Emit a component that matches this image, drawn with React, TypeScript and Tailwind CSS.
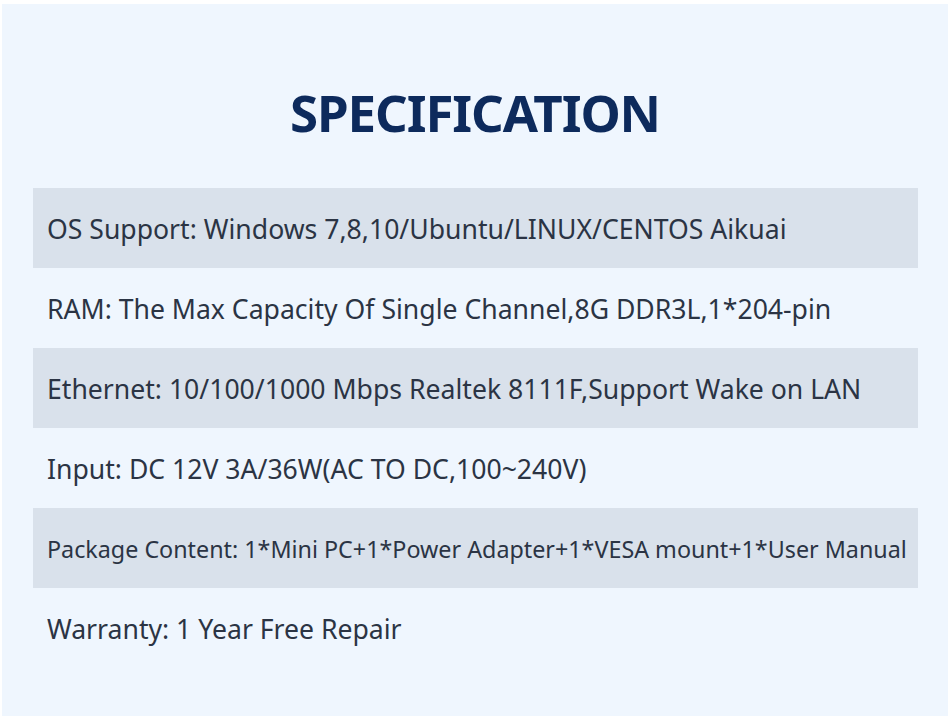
const specs = [
  { text: "OS Support: Windows 7,8,10/Ubuntu/LINUX/CENTOS Aikuai", shaded: true },
  { text: "RAM: The Max Capacity Of Single Channel,8G DDR3L,1*204-pin", shaded: false },
  { text: "Ethernet: 10/100/1000 Mbps Realtek 8111F,Support Wake on LAN", shaded: true },
  { text: "Input: DC 12V 3A/36W(AC TO DC,100~240V)", shaded: false },
  { text: "Package Content: 1*Mini PC+1*Power Adapter+1*VESA mount+1*User Manual", shaded: true, small: true },
  { text: "Warranty: 1 Year Free Repair", shaded: false },
];

export default function App() {
  return (
    <div className="h-[718px] w-[950px] bg-white pb-[2px] pl-[2px] pr-[2px] pt-[4px]">
      <div className="flex h-full flex-col bg-[#eff6fe]" style={{ fontFamily: "'Noto Sans', sans-serif" }}>
        <h1 className="mt-[78px] text-center text-[51px] font-bold leading-[60px] tracking-[-1.1px] text-[#0d2a5c]">
          SPECIFICATION
        </h1>
        <div className="mt-[46px] ml-[31px] flex w-[885px] flex-col">
          {specs.map((s) => (
            <div
              key={s.text}
              className={`flex h-[80px] items-center pl-[14px] pt-[3px] text-[#2b3444] ${
                s.shaded ? "bg-[#d9e1eb]" : ""
              } ${s.small ? "text-[23.3px]" : "text-[26.6px]"}`}
            >
              {s.text}
            </div>
          ))}
        </div>
      </div>
    </div>
  );
}
